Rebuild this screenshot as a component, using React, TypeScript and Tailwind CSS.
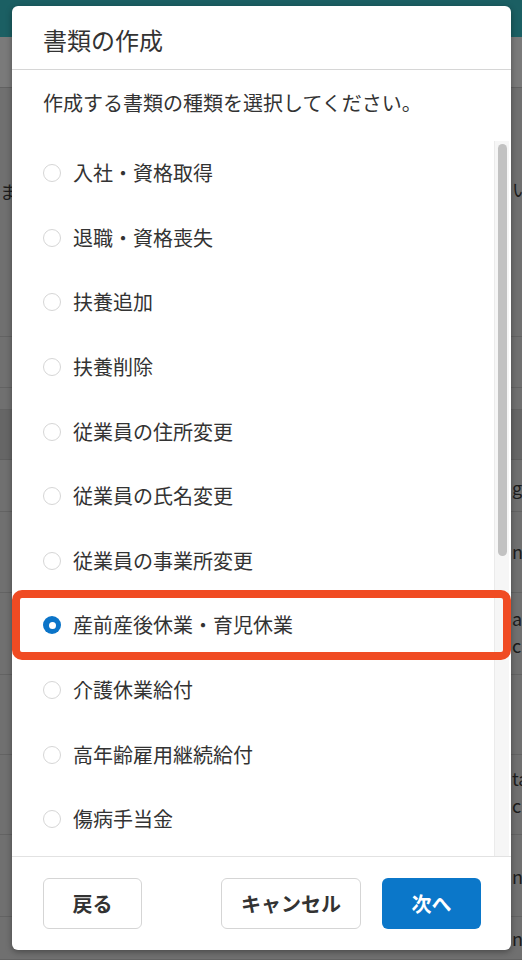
import { useState } from 'react'

const DOC_TYPES = [
  '入社・資格取得',
  '退職・資格喪失',
  '扶養追加',
  '扶養削除',
  '従業員の住所変更',
  '従業員の氏名変更',
  '従業員の事業所変更',
  '産前産後休業・育児休業',
  '介護休業給付',
  '高年齢雇用継続給付',
  '傷病手当金',
]

// dimmed page behind the modal
function BackgroundPage() {
  return (
    <div className="flex flex-col w-[522px] h-[960px] bg-[#707070] text-[#1c1c1c] text-[18px]">
      <div className="h-[37px] shrink-0 bg-[#1b5f63]" />
      <div className="h-[51px] shrink-0 bg-[#7a7a7a] border-b border-[#626262]" />
      <Row h="h-[249px]" left="ま" leftPad="pt-[90px]" right="い" rightPad="pt-[88px]" />
      <Row h="h-[51px]" />
      <Row h="h-[22px]" />
      <div className="h-[50px] shrink-0 bg-[#666666] border-b border-[#5e5e5e]" />
      <Row h="h-[52px]" right="g(" rightPad="pt-[14px]" />
      <Row h="h-[81px]" right="n" rightPad="pt-[26px]" />
      <Row h="h-[82px]" right={'a\nc'} rightPad="pt-[12px]" />
      <Row h="h-[80px]" />
      <Row h="h-[80px]" right={'ta\nc'} rightPad="pt-[10px]" />
      <Row h="h-[82px]" right="n" rightPad="pt-[28px]" />
      <Row h="h-[43px]" right="n" rightPad="pt-[8px]" />
    </div>
  )
}

function Row({ h, left, leftPad, right, rightPad }: { h: string; left?: string; leftPad?: string; right?: string; rightPad?: string }) {
  return (
    <div className={`${h} shrink-0 flex justify-between border-b border-[#636363] overflow-hidden`}>
      <div className={`w-[12px] overflow-hidden whitespace-pre leading-[26px] ${leftPad ?? ''}`}>{left}</div>
      <div className={`w-[10px] overflow-hidden whitespace-pre leading-[27px] ${rightPad ?? ''}`}>{right}</div>
    </div>
  )
}

function Radio({ checked }: { checked: boolean }) {
  if (checked) {
    return (
      <span className="w-[18px] h-[18px] shrink-0 rounded-full bg-[#0b74c8] flex items-center justify-center">
        <span className="w-[7px] h-[7px] rounded-full bg-white" />
      </span>
    )
  }
  return <span className="w-[18px] h-[18px] shrink-0 rounded-full border-[1.5px] border-[#d6d6d6] bg-white" />
}

export default function App() {
  const [selected, setSelected] = useState(7)

  return (
    <div className="relative w-[522px] h-[960px] overflow-hidden font-['Hiragino_Sans','Noto_Sans_CJK_JP',sans-serif]">
      <BackgroundPage />

      <div className="absolute left-[12px] top-[6px] w-[499px] h-[944px] bg-white rounded-[6px] shadow-[0_2px_6px_rgba(0,0,0,0.35)] flex flex-col">
        <div className="h-[64px] shrink-0 border-b border-[#d6d6d6] px-[31px] pt-[20px]">
          <h2 className="text-[24px] leading-[28px] text-[#333333] font-normal">書類の作成</h2>
        </div>

        <p className="shrink-0 px-[31px] pt-[19px] pb-[24px] text-[20px] leading-[28px] text-[#333333]">
          作成する書類の種類を選択してください。
        </p>

        <div className="flex-1 flex min-h-0">
          <ul className="flex-1 overflow-hidden">
            {DOC_TYPES.map((label, i) => (
              <li
                key={label}
                onClick={() => setSelected(i)}
                className="h-[64.6px] flex items-center gap-[12px] pl-[31px] cursor-pointer"
              >
                <Radio checked={selected === i} />
                <span className="text-[20px] leading-[24px] text-[#333333]">{label}</span>
              </li>
            ))}
          </ul>
          <div className="w-[15px] mr-[2px] shrink-0 bg-[#f6f6f6] border-l border-[#ebebeb] pt-[3px] flex justify-center">
            <div className="w-[9px] h-[412px] rounded-full bg-[#c2c2c2]" />
          </div>
        </div>

        <div className="h-[94px] shrink-0 border-t border-[#e2e2e2] pl-[31px] pr-[30px] pt-[21px] flex justify-between items-start">
          <button className="w-[99px] h-[51px] rounded-[6px] border border-[#d5d5d5] bg-white text-[20px] font-bold text-[#333333]">
            戻る
          </button>
          <div className="flex gap-[21px]">
            <button className="w-[140px] h-[51px] rounded-[6px] border border-[#d5d5d5] bg-white text-[20px] font-bold text-[#333333]">
              キャンセル
            </button>
            <button className="w-[99px] h-[51px] rounded-[6px] bg-[#0b77c9] text-[20px] font-bold text-white">
              次へ
            </button>
          </div>
        </div>

        {/* highlight annotation around the selected option */}
        <div className="absolute left-0 right-0 top-[584px] h-[70px] rounded-[10px] border-[8px] border-[#f04b23] pointer-events-none" />
      </div>
    </div>
  )
}
